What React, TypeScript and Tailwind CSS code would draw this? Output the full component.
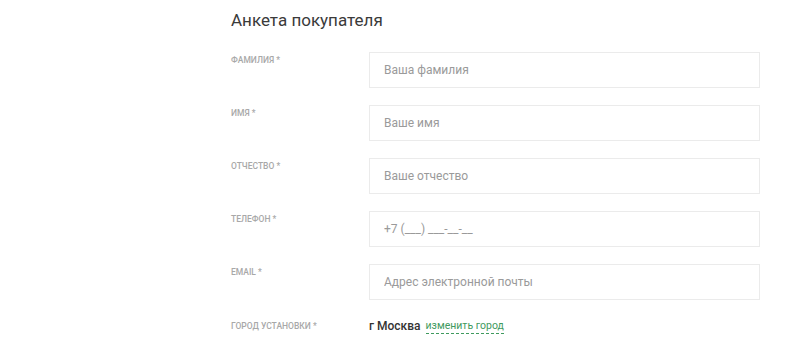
import React from "react";

const fields = [
  { label: "Фамилия *", placeholder: "Ваша фамилия" },
  { label: "Имя *", placeholder: "Ваше имя" },
  { label: "Отчество *", placeholder: "Ваше отчество" },
  { label: "Телефон *", placeholder: "+7 (___) ___-__-__" },
  { label: "Email *", placeholder: "Адрес электронной почты" },
];

export default function App() {
  return (
    <div className="min-h-[350px] w-[800px] bg-white font-['Roboto',sans-serif]">
      <div className="ml-[231px] w-[529px] pt-[7px]">
        {/* Title */}
        <h1 className="text-[17px] leading-[26px] font-normal text-[#3a3a3a]">Анкета покупателя</h1>

        <div className="mt-[19px] flex flex-col gap-[17px]">
          {fields.map((f) => (
            <div key={f.label} className="flex items-start">
              <label className="w-[138px] pt-[2px] text-[8.5px] leading-[12px] font-medium uppercase text-[#a8a8a8]">
                {f.label}
              </label>
              <input
                type="text"
                placeholder={f.placeholder}
                className="h-[36px] w-[391px] border border-[#ebebeb] bg-white px-[14px] text-[12px] text-[#333] placeholder:text-[#9a9a9a] outline-none"
              />
            </div>
          ))}
        </div>

        {/* City */}
        <div className="mt-[17px] flex items-center">
          <span className="w-[138px] text-[8.5px] font-medium uppercase text-[#a8a8a8]">Город установки *</span>
          <span className="text-[12px] font-medium text-[#333333]">г Москва</span>
          <a className="ml-[5px] text-[10.5px] leading-[14px] text-[#3f9a5e] border-b border-dashed border-[#3f9a5e] cursor-pointer">
            изменить город
          </a>
        </div>
      </div>
    </div>
  );
}
